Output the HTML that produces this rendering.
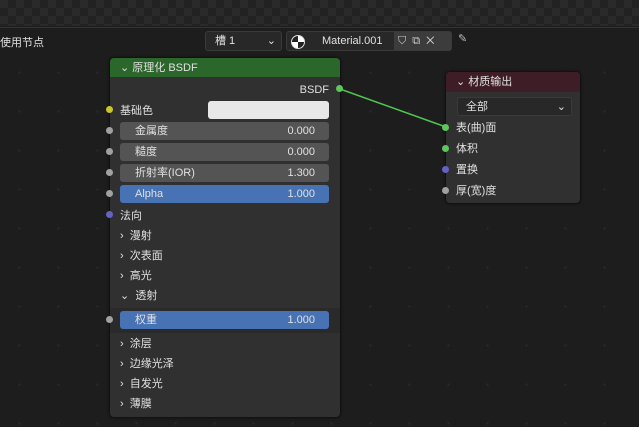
<!DOCTYPE html><html><head><style>
body{margin:0;width:639px;height:427px;overflow:hidden;background:#1d1d1d;font-family:"Liberation Sans","Noto Sans CJK SC",sans-serif;font-size:11px;color:#e0e0e0;position:relative}
.a{position:absolute}
.chk{left:0;top:0;width:639px;height:26px;background-color:#2a2a2a;background-image:linear-gradient(45deg,#222 25%,transparent 25%,transparent 75%,#222 75%),linear-gradient(45deg,#222 25%,transparent 25%,transparent 75%,#222 75%);background-size:16px 16px;background-position:0 0,8px 8px}
.hdr{left:0;top:27px;width:639px;height:26px;background:#1d1d1d;border-top:1px solid #333}
.grid{left:0;top:53px;width:639px;height:374px;background-image:radial-gradient(#2a2a2a 1px,transparent 1.2px);background-size:39px 39px}
.node{background:#303030;border-radius:4px;box-shadow:0 0 3px #000}
.row{position:absolute;left:10px;height:20px;line-height:22px}
.fld{position:absolute;left:10px;width:209px;height:18px;background:#545454;border-radius:3px;line-height:19px}
.fld span{position:absolute;left:15px}.fld b{position:absolute;right:14px;font-weight:normal}
.blue{background:#4772b3}
.s{position:absolute;width:7px;height:7px;border-radius:50%;left:-4px}
</style></head><body>
<div class="a chk"></div>
<div class="a hdr"></div>
<div class="a" style="left:0;top:34px;font-size:11px">使用节点</div>
<div class="a" style="left:205px;top:31px;width:75px;height:18px;background:#282828;border:1px solid #3a3a3a;border-radius:3px;line-height:19px"><span style="margin-left:9px">槽 1</span><span style="position:absolute;right:5px">⌄</span></div>
<div class="a" style="left:286px;top:31px;width:164px;height:18px;background:#282828;border:1px solid #3a3a3a;border-radius:3px;line-height:19px">
<span style="position:absolute;left:4px;top:3px;width:12px;height:12px;border-radius:50%;background:conic-gradient(#fff 0 25%,#222 25% 50%,#fff 50% 75%,#222 75%);border:1px solid #ddd"></span>
<span style="position:absolute;left:35px;">Material.001</span>
<span style="position:absolute;left:107px;top:0;width:57px;height:18px;background:#3c3c3c;color:#ccc;letter-spacing:6px;padding-left:4px;box-sizing:border-box">⛉⧉✕</span></div>
<div class="a" style="left:458px;top:32px;color:#bbb">✎</div>
<div class="a grid"></div>
<svg class="a" style="left:0;top:0" width="639" height="427"><path d="M340 89 L446 127" stroke="#4fc44f" stroke-width="1.6" fill="none"/></svg>

<div class="a node" style="left:110px;top:58px;width:230px;height:359px">
<div style="height:19px;background:#2b662b;border-radius:4px 4px 0 0;line-height:20px;padding-left:10px">⌄ 原理化 BSDF</div>
<div class="row" style="top:21px;left:auto;right:11px">BSDF</div>
<div class="s" style="left:226px;top:27px;background:#5cc85c"></div>
<div class="s" style="top:48px;background:#c7c729"></div><div class="row" style="top:42px">基础色</div>
<div class="a" style="left:98px;top:43px;width:121px;height:18px;background:#e8e8e8;border-radius:3px"></div>
<div class="s" style="top:69px;background:#a1a1a1"></div><div class="fld" style="top:64px"><span>金属度</span><b>0.000</b></div>
<div class="s" style="top:90px;background:#a1a1a1"></div><div class="fld" style="top:85px"><span>糙度</span><b>0.000</b></div>
<div class="s" style="top:111px;background:#a1a1a1"></div><div class="fld" style="top:106px"><span>折射率(IOR)</span><b>1.300</b></div>
<div class="s" style="top:132px;background:#a1a1a1"></div><div class="fld blue" style="top:127px"><span>Alpha</span><b>1.000</b></div>
<div class="s" style="top:153px;background:#6363c7"></div><div class="row" style="top:147px">法向</div>
<div class="row" style="top:167px">›&nbsp; 漫射</div>
<div class="row" style="top:187px">›&nbsp; 次表面</div>
<div class="row" style="top:207px">›&nbsp; 高光</div>
<div class="row" style="top:227px">⌄&nbsp; 透射</div>
<div class="a" style="left:0;top:250px;width:230px;height:25px;background:#2a2a2a"></div>
<div class="s" style="top:258px;background:#a1a1a1"></div><div class="fld blue" style="top:253px"><span>权重</span><b>1.000</b></div>
<div class="row" style="top:275px">›&nbsp; 涂层</div>
<div class="row" style="top:295px">›&nbsp; 边缘光泽</div>
<div class="row" style="top:315px">›&nbsp; 自发光</div>
<div class="row" style="top:335px">›&nbsp; 薄膜</div>
</div>

<div class="a node" style="left:446px;top:72px;width:134px;height:131px">
<div style="height:20px;background:#3e1d26;border-radius:4px 4px 0 0;line-height:20px;padding-left:10px">⌄ 材质输出</div>
<div class="a" style="left:11px;top:25px;width:113px;height:17px;background:#282828;border:1px solid #3a3a3a;border-radius:3px;line-height:18px"><span style="margin-left:8px">全部</span><span style="position:absolute;right:5px">⌄</span></div>
<div class="s" style="top:52px;background:#5cc85c"></div><div class="row" style="top:45px">表(曲)面</div>
<div class="s" style="top:73px;background:#5cc85c"></div><div class="row" style="top:66px">体积</div>
<div class="s" style="top:94px;background:#6363c7"></div><div class="row" style="top:87px">置换</div>
<div class="s" style="top:115px;background:#a1a1a1"></div><div class="row" style="top:108px">厚(宽)度</div>
</div>
</body></html>
